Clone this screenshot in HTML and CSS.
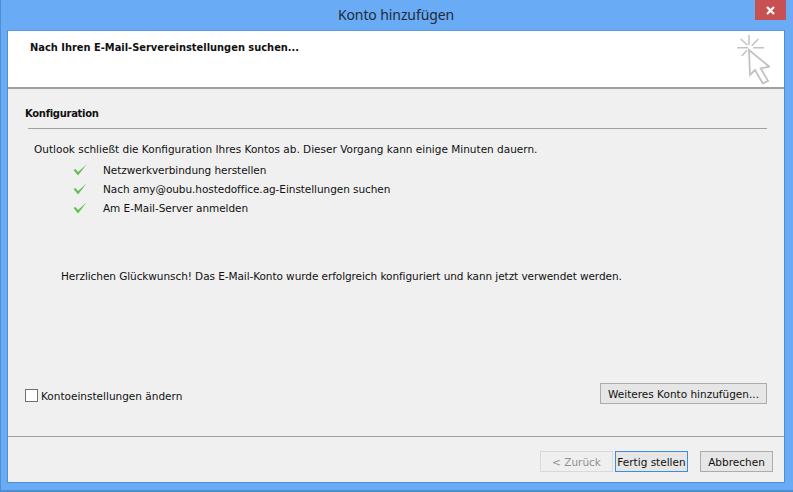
FILE: index.html
```html
<!DOCTYPE html>
<html lang="de">
<head>
<meta charset="utf-8">
<title>Konto hinzufügen</title>
<link rel="stylesheet" href="styles.css">
</head>
<body>
<div class="window">
  <div class="titlebar">
    <div class="title">Konto hinzufügen</div>
    <div class="close"><svg width="9" height="9" viewBox="0 0 9 9"><path d="M1 1L8 8M8 1L1 8" stroke="#fff" stroke-width="2.2" fill="none"/></svg></div>
  </div>
  <div class="client">
    <div class="header">
      <div class="heading">Nach Ihren E-Mail-Servereinstellungen suchen...</div>
      <svg class="cursor" width="34" height="50" viewBox="0 0 34 50">
        <g stroke="#c2c2c2" stroke-width="1.5" fill="none">
          <path d="M13 0V10M1.300 12.700H12M17.300 12.700H28M4.700 4L11.300 10M22.300 4L15.700 10.700M5.700 21L11.300 15"/>
          <path d="M13 15L33.300 31.700L24.700 33.300L32 46L26.700 48.300L19 35L14 40Z" fill="#fff" stroke-width="1.800"/>
        </g>
      </svg>
    </div>
    <div class="body">
      <div class="section-title">Konfiguration</div>
      <div class="rule"></div>
      <p class="intro">Outlook schließt die Konfiguration Ihres Kontos ab. Dieser Vorgang kann einige Minuten dauern.</p>
      <ul class="steps">
        <li><svg class="check" width="14" height="12" viewBox="0 0 14 12"><path d="M0.500 6L2.500 5L5 8L13.500 0.500L5 11.500Z" fill="#62c052"/></svg>Netzwerkverbindung herstellen</li>
        <li><svg class="check" width="14" height="12" viewBox="0 0 14 12"><path d="M0.500 6L2.500 5L5 8L13.500 0.500L5 11.500Z" fill="#62c052"/></svg>Nach amy@oubu.hostedoffice.ag-Einstellungen suchen</li>
        <li><svg class="check" width="14" height="12" viewBox="0 0 14 12"><path d="M0.500 6L2.500 5L5 8L13.500 0.500L5 11.500Z" fill="#62c052"/></svg>Am E-Mail-Server anmelden</li>
      </ul>
      <p class="congrats">Herzlichen Glückwunsch! Das E-Mail-Konto wurde erfolgreich konfiguriert und kann jetzt verwendet werden.</p>
      <div class="options">
        <label class="checkbox-row"><span class="checkbox"></span>Kontoeinstellungen ändern</label>
        <button class="btn btn-more">Weiteres Konto hinzufügen...</button>
      </div>
    </div>
    <div class="footer">
      <button class="btn btn-disabled">&lt; Zurück</button>
      <button class="btn btn-default">Fertig stellen</button>
      <button class="btn btn-cancel">Abbrechen</button>
    </div>
  </div>
</div>
</body>
</html>
```
FILE: styles.css
```css
* { box-sizing: border-box; }
html, body { margin: 0; padding: 0; }
body {
  width: 793px;
  height: 492px;
  overflow: hidden;
  font-family: "DejaVu Sans", sans-serif;
  font-size: 10.5px;
  color: #111;
  background: #6aabf5;
}
.window {
  width: 793px;
  height: 492px;
  background: #6aabf5;
  border-left: 1px solid #4f8fd0;
  border-bottom: 2px solid #4f8fd0;
  display: flex;
  flex-direction: column;
  padding: 0 8px 7px 6px;
}
.titlebar {
  height: 30px;
  flex: none;
  display: flex;
  justify-content: center;
  position: relative;
}
.title {
  font-size: 14px;
  letter-spacing: -0.1px;
  line-height: 30px;
  color: #1f2a38;
  font-family: "Noto Sans", sans-serif;
}
.close {
  position: absolute;
  right: -1px;
  top: 0;
  width: 31px;
  height: 20px;
  background: #c75050;
  display: flex;
  align-items: center;
  justify-content: center;
}
.client {
  flex: 1;
  background: #f0f0f0;
  border: 1px solid #4f8fd0;
  border-top-color: #5f9ce0;
  display: flex;
  flex-direction: column;
  min-height: 0;
}
.header {
  height: 58px;
  flex: none;
  background: #fff;
  border-bottom: 2px solid #a0a0a0;
  display: flex;
  justify-content: space-between;
  padding: 9px 14px 0 22px;
}
.heading { font-weight: bold; font-size: 9.9px; line-height: 16px; color: #111; }
.cursor { margin-top: -5px; }
.body { flex: 1; display: flex; flex-direction: column; padding: 0 17px 0 17px; }
.section-title { font-weight: bold; font-size: 10px; letter-spacing: -0.3px; line-height: 16px; margin-top: 17px; }
.rule { height: 1px; background: #a0a0a0; margin: 6px 0 0 3px; }
.intro { margin: 12px 0 0 9px; line-height: 16px; }
.steps { list-style: none; margin: 3px 0 0; padding: 0 0 0 48px; letter-spacing: -0.06px; }
.steps li { display: flex; align-items: center; height: 19px; line-height: 16px; }
.check { margin-right: 16px; }
.congrats { margin: 51px 0 0 36px; line-height: 16px; letter-spacing: -0.07px; }
.options { display: flex; justify-content: space-between; align-items: flex-end; margin-top: 99px; }
.checkbox-row { display: flex; align-items: center; gap: 3px; margin-bottom: 2px; }
.checkbox { width: 13px; height: 13px; background: #fff; border: 1px solid #707070; }
.btn {
  font: inherit;
  color: #111;
  height: 21px;
  padding: 0;
  white-space: nowrap;
  background: #e6e6e6;
  border: 1px solid #acacac;
}
.btn-more { width: 167px; }
.footer {
  height: 46px;
  flex: none;
  border-top: 1px solid #a0a0a0;
  display: flex;
  justify-content: flex-end;
  padding: 14px 11px 0 0;
}
.btn-disabled { width: 73px; background: #efefef; border-color: #d9d9d9; color: #909090; margin-right: 2px; }
.btn-default { width: 73px; background: #e6e6e6; border-color: #3a8fd6; margin-right: 12px; }
.btn-cancel { width: 73px; }
```
